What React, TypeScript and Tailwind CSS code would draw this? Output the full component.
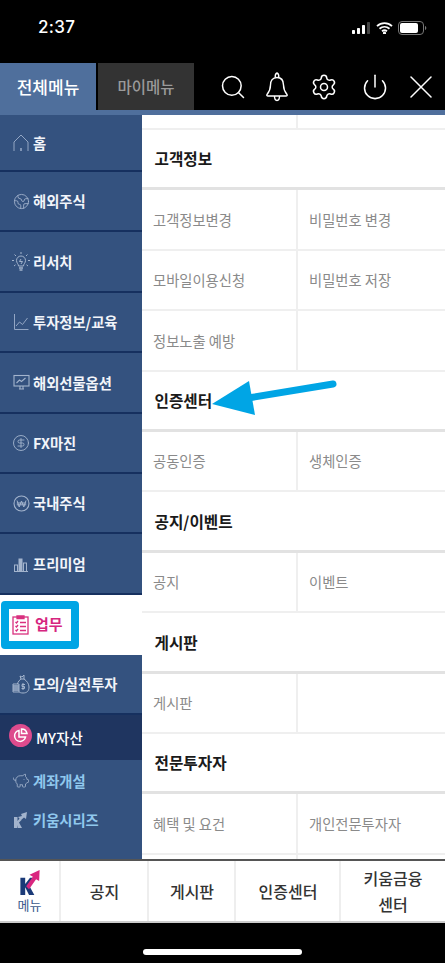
import React from 'react';
import { Search, Settings, Power, Earth, CircleDollarSign, PiggyBank } from 'lucide-react';

const cjk = { fontFamily: '"Noto Sans CJK KR", "Noto Sans", sans-serif' };

const HomeIcon = () => (
  <svg width="16" height="18" viewBox="0 0 16 18" fill="none" stroke="#93a6c4" strokeWidth="1">
    <path d="M1 17V8l7-7 7 7v9" />
    <path d="M8 14v3" strokeWidth="1.6" />
  </svg>
);

const BulbIcon = () => (
  <svg width="18" height="20" viewBox="0 0 18 20" fill="none" stroke="#a3b4cd" strokeWidth="1">
    <path d="M6.500 14c0-2-2-3-2-5.500a4.500 4.500 0 0 1 9 0c0 2.500-2 3.500-2 5.500z" />
    <path d="M7 16h4M7.500 18h3" strokeWidth="1.300" />
    <path d="M9 7l-1.500 2.500h3L9 12" />
    <path d="M9 0v2M2.500 2.500L4 4M15.500 2.500L14 4M0 8.500h2M16 8.500h2M2 14l1.500-1.200M16 14l-1.500-1.200" />
  </svg>
);

const ChartIcon = () => (
  <svg width="16" height="18" viewBox="0 0 16 18" fill="none" stroke="#93a6c4" strokeWidth="1">
    <path d="M1.500 1v15.500H15.500" />
    <path d="M3 13l3.500-4 3 2.500L14.500 5" />
  </svg>
);

const MonitorIcon = () => (
  <svg width="17" height="17" viewBox="0 0 17 17" fill="none" stroke="#a3b4cd" strokeWidth="1.100">
    <rect x="1" y="1.500" width="15" height="10.500" />
    <path d="M3.500 9l3-3 2 1.500 4-3.500" />
    <path d="M6 15h5M7 12v3M10 12v3" />
  </svg>
);

const WonIcon = () => (
  <svg width="17" height="17" viewBox="0 0 17 17" fill="none" stroke="#a3b4cd">
    <circle cx="8.500" cy="8.500" r="7.500" strokeWidth="1.100" />
    <path d="M4 5.500l2.200 6.500 2.300-6 2.300 6L13 5.500M3.800 8h9.400M3.800 9.800h9.400" strokeWidth="1" />
  </svg>
);

const BarsIcon = () => (
  <svg width="16" height="16" viewBox="0 0 16 16" fill="none" stroke="#a3b4cd" strokeWidth="1">
    <path d="M1 15.500h14" />
    <rect x="1.500" y="9" width="3" height="6.500" />
    <rect x="6" y="3" width="3" height="12.500" fill="#a3b4cd" />
    <rect x="10.500" y="7" width="3" height="8.500" />
  </svg>
);

const MoneyIcon = () => (
  <svg width="18" height="20" viewBox="0 0 18 20" fill="none" stroke="#a3b4cd" strokeWidth="1">
    <path d="M9 5c-3 2-4 5-4 8 0 4 2 6 6 6s6-2 6-6c0-3-2-6-5-8z" />
    <path d="M9 5l-1-3 2 1 2-2v4" />
    <path d="M1 10h6v2H1zM1 12h6v2H1zM1 14h6v2H1zM1 16h6v2H1z" fill="#34527f" />
    <path d="M11 9v7M13 10.500h-3v2h2.500v2H9.500" />
  </svg>
);

const ClipIcon = () => (
  <svg width="17" height="20" viewBox="0 0 17 20" fill="none" stroke="#d9307f" strokeWidth="1.300">
    <rect x="1" y="2" width="15" height="17" />
    <path d="M5 1h7v2.500H5z" fill="#d9307f" />
    <path d="M3.500 7l1 1 1.500-2M3.500 11l1 1 1.500-2M3.500 15l1 1 1.500-2M8 7.500h6M8 11.500h6M8 15.500h6" />
  </svg>
);

const KArrow = ({ w, h }: { w: number; h: number }) => (
  <svg width={w} height={h} viewBox="0 0 20 26">
    <path d="M0 8h5v6.500L10 8h3.500l-5 7 6 11H9l-4-8v8H0z" fill="#1b3a78" />
    <path d="M6 17L13 7 9.500 5 20 0l-.5 11.500-3.200-2L9 20z" fill="#d9267f" />
  </svg>
);

const sideItems: { label: string; icon: React.ReactNode }[] = [
  { label: '해외주식', icon: <Earth size={17} strokeWidth={1.2} color="#a3b4cd" /> },
  { label: '리서치', icon: <BulbIcon /> },
  { label: '투자정보/교육', icon: <ChartIcon /> },
  { label: '해외선물옵션', icon: <MonitorIcon /> },
  { label: 'FX마진', icon: <CircleDollarSign size={18} strokeWidth={1.2} color="#a3b4cd" /> },
  { label: '국내주식', icon: <WonIcon /> },
  { label: '프리미엄', icon: <BarsIcon /> },
];

const sections: { title: string; rows: [string, string][] }[] = [
  {
    title: '고객정보',
    rows: [
      ['고객정보변경', '비밀번호 변경'],
      ['모바일이용신청', '비밀번호 저장'],
      ['정보노출 예방', ''],
    ],
  },
  { title: '인증센터', rows: [['공동인증', '생체인증']] },
  { title: '공지/이벤트', rows: [['공지', '이벤트']] },
  { title: '게시판', rows: [['게시판', '']] },
  { title: '전문투자자', rows: [['혜택 및 요건', '개인전문투자자']] },
];

const SideRow: React.FC<{ icon: React.ReactNode; label: string; h?: string }> = ({ icon, label, h = 'h-[60.400px]' }) => (
  <div className={`${h} shrink-0 flex items-center border-b-2 border-[#16305f]`}>
    <div className="w-[33px] flex justify-center pl-[9px] shrink-0">{icon}</div>
    <span className="text-[14.300px] font-bold text-[#f2f5fa] whitespace-nowrap">{label}</span>
  </div>
);

export default function App() {
  return (
    <div className="relative w-[445px] h-[963px] bg-black overflow-hidden flex flex-col" style={cjk}>
      {/* status bar */}
      <div className="h-[63px] shrink-0 flex items-center justify-between pl-[38px] pr-[18px] pb-[8px]">
        <span className="text-[17px] font-medium text-white tracking-[0.3px]" style={{ fontFamily: 'Inter, sans-serif' }}>2:37</span>
        <div className="flex items-center gap-[5px]">
          <svg width="19" height="12" viewBox="0 0 19 12" fill="white">
            <rect x="0" y="8" width="3" height="4" rx="0.700" />
            <rect x="5" y="6" width="3" height="6" rx="0.700" />
            <rect x="10" y="3" width="3" height="9" rx="0.700" />
            <rect x="15" y="0" width="3" height="12" rx="0.700" fill="#444" />
          </svg>
          <svg width="17" height="12" viewBox="0 0 17 12" fill="none" stroke="white" strokeWidth="1.800">
            <path d="M1 4.200c4.300-4 10.700-4 15 0M3.500 6.800c3-2.600 7-2.600 10 0M6 9.200c1.500-1.200 3.500-1.200 5 0" />
            <circle cx="8.500" cy="11" r="0.700" fill="white" />
          </svg>
          <svg width="29" height="14" viewBox="0 0 29 14" fill="none">
            <rect x="0.500" y="0.500" width="25" height="13" rx="3.500" stroke="#777" />
            <rect x="2" y="2" width="18" height="10" rx="2" fill="white" />
            <path d="M27 5v4c.8-.3 1.300-1 1.300-2s-.5-1.700-1.300-2z" fill="#777" />
          </svg>
        </div>
      </div>

      {/* top menu */}
      <div className="h-[47px] shrink-0 flex">
        <div className="w-[96px] bg-[#4f6f9c] flex items-center justify-center text-[17px] font-medium text-white">전체메뉴</div>
        <div className="w-[96px] ml-[2px] bg-[#333333] flex items-center justify-center text-[15.500px] font-medium text-[#9a9a9a]">마이메뉴</div>
        <div className="flex-1 flex items-center text-white">
          <Search size={28} strokeWidth={1.300} className="ml-[24.500px] shrink-0" />
          <svg width="22" height="30" viewBox="0 0 22 30" fill="none" stroke="white" strokeWidth="1.400" strokeLinejoin="round" className="ml-[19.500px] shrink-0">
            <path d="M11 5.500c-4.500 0-6.500 3.500-6.500 7.500 0 5-1.500 7-3.500 9.500-.5.800 0 1.500 1 1.500h18c1 0 1.500-.7 1-1.500-2-2.500-3.500-4.500-3.500-9.500 0-4-2-7.500-6.500-7.500z" />
            <path d="M9.300 5.700C9 3.500 9.800 1.500 11 1c1.200.5 2 2.500 1.700 4.700" />
            <path d="M8.500 24c0 2.800 1.200 4.500 2.500 4.500s2.500-1.700 2.500-4.500" />
          </svg>
          <Settings size={28} strokeWidth={1.300} className="ml-[22px] shrink-0" />
          <Power size={28} strokeWidth={1.300} className="ml-[23px] shrink-0" />
          <svg width="22" height="22" viewBox="0 0 22 22" fill="none" stroke="white" strokeWidth="1.500" strokeLinecap="round" className="ml-[21px] shrink-0">
            <path d="M1 1l20 20M21 1L1 21" />
          </svg>
        </div>
      </div>
      <div className="h-[5px] shrink-0 bg-[#4f6f9c]" />

      {/* body */}
      <div className="h-[744px] shrink-0 flex bg-white overflow-hidden">
        <div className="w-[142px] shrink-0 bg-[#34527f] flex flex-col">
          <SideRow icon={<HomeIcon />} label="홈" h="h-[57px]" />
          {sideItems.map((item) => (
            <SideRow key={item.label} icon={item.icon} label={item.label} />
          ))}
          <div className="h-[60px] shrink-0 bg-white flex items-center">
            <div className="ml-[1px] w-[78px] h-[48px] border-[8px] border-[#00a5e5] rounded-[4px] bg-white flex items-center gap-[6px] pl-[3px]">
              <ClipIcon />
              <span className="text-[15px] font-bold text-[#d6267f]">업무</span>
            </div>
          </div>
          <SideRow icon={<MoneyIcon />} label="모의/실전투자" />
          <div className="h-[45px] shrink-0 bg-[#1f3560] flex items-center pl-[9px] gap-[4px]">
            <div className="w-[23px] h-[23px] -mt-[4px] rounded-full bg-[#dd4b8d] flex items-center justify-center">
              <svg width="15" height="15" viewBox="0 0 15 15" fill="none" stroke="white" strokeWidth="1.500">
                <path d="M6 2.500a5.500 5.500 0 1 0 6.500 6.500H6z" />
                <path d="M8.500 1v4.500H14A5.500 5.500 0 0 0 8.500 1z" />
              </svg>
            </div>
            <span className="text-[14.500px] font-medium text-white whitespace-nowrap">MY자산</span>
          </div>
          <div className="h-[39px] shrink-0 mt-[1px] flex items-center">
            <div className="w-[33px] pl-[12px] shrink-0">
              <PiggyBank size={18} strokeWidth={1.100} color="#a3b4cd" />
            </div>
            <span className="text-[14.300px] font-bold text-[#90c8ee]">계좌개설</span>
          </div>
          <div className="h-[39px] shrink-0 flex items-center">
            <div className="w-[33px] pl-[14px] shrink-0">
              <svg width="13" height="16" viewBox="0 0 13 16" fill="#a3b4cd">
                <path d="M0 5h3.500v4L6 6l1.500 2L5 10.500 8 16H4l-.5-3-.1 3H0z" />
                <path d="M4 5l4-1-1-2 6-2-1 7-2-1.500L7 8z" />
              </svg>
            </div>
            <span className="text-[14.300px] font-bold text-[#90c8ee]">키움시리즈</span>
          </div>
        </div>

        <div className="flex-1 min-w-0 flex flex-col">
          <div className="h-[15px] shrink-0 border-b-2 border-[#efefef] flex">
            <div className="w-[156px] border-r-2 border-[#efefef]" />
          </div>
          {sections.map((section) => (
            <React.Fragment key={section.title}>
              <div className="h-[60.400px] shrink-0 flex items-center pl-[12.500px] pt-[1px] text-[15.700px] font-bold text-[#1a1a1a] border-b-[3px] border-[#e2e2e2]">
                {section.title}
              </div>
              {section.rows.map((row) => (
                <div key={row[0]} className="h-[60.400px] shrink-0 flex border-b-2 border-[#efefef]">
                  <div className="w-[156px] shrink-0 flex items-center pl-[11px] text-[14.300px] text-[#8a8a8a] border-r-2 border-[#efefef]">{row[0]}</div>
                  <div className="flex-1 flex items-center pl-[11px] text-[14.300px] text-[#8a8a8a]">{row[1]}</div>
                </div>
              ))}
            </React.Fragment>
          ))}
          <div className="flex-1 flex">
            <div className="w-[156px] border-r-2 border-[#efefef]" />
          </div>
        </div>
      </div>

      {/* bottom bar */}
      <div className="h-[64px] shrink-0 flex bg-white border-t-2 border-[#555555] border-b-2 border-b-[#cccccc] text-[#333333] text-[16px] font-medium">
        <div className="w-[61px] shrink-0 flex flex-col items-center justify-center border-r-2 border-[#eeeeee]">
          <KArrow w={20} h={25} />
          <span className="text-[13px] leading-[16px] mt-[2px] font-normal text-[#3c5a8c]">메뉴</span>
        </div>
        <div className="w-[88px] shrink-0 flex items-center justify-center border-r-2 border-[#eeeeee] pl-[1px] pb-[1px]">공지</div>
        <div className="w-[87px] shrink-0 flex items-center justify-center border-r-2 border-[#eeeeee] pl-[1px] pb-[1px]">게시판</div>
        <div className="w-[105px] shrink-0 flex items-center justify-center border-r-2 border-[#eeeeee] pl-[1px] pb-[1px]">인증센터</div>
        <div className="flex-1 flex items-center justify-center text-center leading-[26px] pb-[1px]">키움금융<br />센터</div>
      </div>

      {/* home indicator */}
      <div className="flex-1 flex justify-center pt-[26px]">
        <div className="w-[159px] h-[6px] rounded-full bg-white" />
      </div>

      {/* annotation arrow */}
      <svg className="absolute left-[205px] top-[370px]" width="140" height="55" viewBox="205 370 140 55">
        <path d="M248 398l85-14" stroke="#00a5e5" strokeWidth="7" strokeLinecap="round" fill="none" />
        <path d="M212 404l37-23 6 34z" fill="#00a5e5" />
      </svg>
    </div>
  );
}
